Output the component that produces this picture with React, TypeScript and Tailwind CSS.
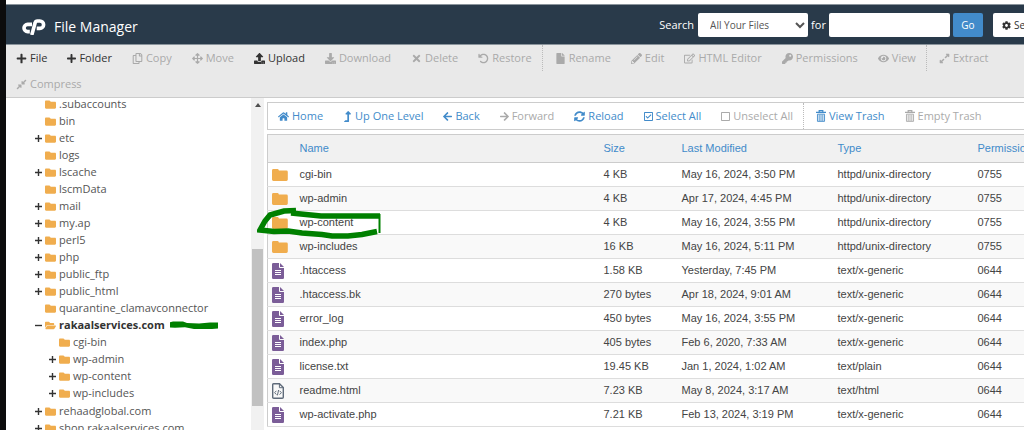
import type { ComponentType, ReactNode } from 'react';
import {
  FaArrowLeft,
  FaArrowRight,
  FaArrowsAlt,
  FaCog,
  FaCompressAlt,
  FaDownload,
  FaExpandAlt,
  FaEye,
  FaFile,
  FaFolder,
  FaFolderOpen,
  FaHome,
  FaKey,
  FaLevelUpAlt,
  FaPencilAlt,
  FaPlus,
  FaRegCheckSquare,
  FaRegCopy,
  FaRegEdit,
  FaRegSquare,
  FaSyncAlt,
  FaTimes,
  FaUpload,
} from 'react-icons/fa';
import { FaArrowRotateLeft } from 'react-icons/fa6';

function cx(...classes: Array<string | false | null | undefined>) {
  return classes.filter(Boolean).join(' ');
}

type Action = {
  label: string;
  icon: ComponentType<{ className?: string }>;
  enabled?: boolean;
  divider?: boolean;
  narrow?: boolean;
};

function TrashIcon() {
  return (
    <svg viewBox="0 0 11 13" className="h-3 w-[10px]" fill="none" stroke="currentColor">
      <path d="M0 2.5h11M3.5 2V.6h4V2" strokeWidth="1.3" />
      <path d="M1.6 4.5h7.8v7.9H1.6zM3.5 5v7M5.5 5v7M7.5 5v7" />
    </svg>
  );
}

const toolbar: Action[] = [
  { label: 'File', icon: FaPlus, enabled: true },
  { label: 'Folder', icon: FaPlus, enabled: true, narrow: true },
  { label: 'Copy', icon: FaRegCopy },
  { label: 'Move', icon: FaArrowsAlt },
  { label: 'Upload', icon: FaUpload, enabled: true },
  { label: 'Download', icon: FaDownload },
  { label: 'Delete', icon: FaTimes },
  { label: 'Restore', icon: FaArrowRotateLeft },
  { label: 'Rename', icon: FaFile, divider: true },
  { label: 'Edit', icon: FaPencilAlt },
  { label: 'HTML Editor', icon: FaRegEdit },
  { label: 'Permissions', icon: FaKey },
  { label: 'View', icon: FaEye },
  { label: 'Extract', icon: FaExpandAlt, divider: true },
  { label: 'Compress', icon: FaCompressAlt },
];

const navigation: Action[] = [
  { label: 'Home', icon: FaHome, enabled: true },
  { label: 'Up One Level', icon: FaLevelUpAlt, enabled: true, narrow: true },
  { label: 'Back', icon: FaArrowLeft, enabled: true, narrow: true },
  { label: 'Forward', icon: FaArrowRight, narrow: true },
  { label: 'Reload', icon: FaSyncAlt, enabled: true },
  { label: 'Select All', icon: FaRegCheckSquare, enabled: true, narrow: true },
  { label: 'Unselect All', icon: FaRegSquare, narrow: true },
  { label: 'View Trash', icon: TrashIcon, enabled: true, divider: true },
  { label: 'Empty Trash', icon: TrashIcon },
];

type TreeNode = {
  name: string;
  toggle?: '+' | '-';
  children?: TreeNode[];
};

const tree: TreeNode[] = [
  { name: '.subaccounts' },
  { name: 'bin' },
  { name: 'etc', toggle: '+' },
  { name: 'logs' },
  { name: 'lscache', toggle: '+' },
  { name: 'lscmData' },
  { name: 'mail', toggle: '+' },
  { name: 'my.ap', toggle: '+' },
  { name: 'perl5', toggle: '+' },
  { name: 'php', toggle: '+' },
  { name: 'public_ftp', toggle: '+' },
  { name: 'public_html', toggle: '+' },
  { name: 'quarantine_clamavconnector' },
  {
    name: 'rakaalservices.com',
    toggle: '-',
    children: [
      { name: 'cgi-bin' },
      { name: 'wp-admin', toggle: '+' },
      { name: 'wp-content', toggle: '+' },
      { name: 'wp-includes', toggle: '+' },
    ],
  },
  { name: 'rehaadglobal.com', toggle: '+' },
  { name: 'shop.rakaalservices.com', toggle: '+' },
];

type Entry = {
  kind: 'folder' | 'text' | 'html';
  name: string;
  size: string;
  modified: string;
  type: string;
  mode: string;
};

const entries: Entry[] = [
  { kind: 'folder', name: 'cgi-bin', size: '4 KB', modified: 'May 16, 2024, 3:50 PM', type: 'httpd/unix-directory', mode: '0755' },
  { kind: 'folder', name: 'wp-admin', size: '4 KB', modified: 'Apr 17, 2024, 4:45 PM', type: 'httpd/unix-directory', mode: '0755' },
  { kind: 'folder', name: 'wp-content', size: '4 KB', modified: 'May 16, 2024, 3:55 PM', type: 'httpd/unix-directory', mode: '0755' },
  { kind: 'folder', name: 'wp-includes', size: '16 KB', modified: 'May 16, 2024, 5:11 PM', type: 'httpd/unix-directory', mode: '0755' },
  { kind: 'text', name: '.htaccess', size: '1.58 KB', modified: 'Yesterday, 7:45 PM', type: 'text/x-generic', mode: '0644' },
  { kind: 'text', name: '.htaccess.bk', size: '270 bytes', modified: 'Apr 18, 2024, 9:01 AM', type: 'text/x-generic', mode: '0644' },
  { kind: 'text', name: 'error_log', size: '450 bytes', modified: 'May 16, 2024, 3:55 PM', type: 'text/x-generic', mode: '0644' },
  { kind: 'text', name: 'index.php', size: '405 bytes', modified: 'Feb 6, 2020, 7:33 AM', type: 'text/x-generic', mode: '0644' },
  { kind: 'text', name: 'license.txt', size: '19.45 KB', modified: 'Jan 1, 2024, 1:02 AM', type: 'text/plain', mode: '0644' },
  { kind: 'html', name: 'readme.html', size: '7.23 KB', modified: 'May 8, 2024, 3:17 AM', type: 'text/html', mode: '0644' },
  { kind: 'text', name: 'wp-activate.php', size: '7.21 KB', modified: 'Feb 13, 2024, 3:19 PM', type: 'text/x-generic', mode: '0644' },
];

function Logo() {
  return (
    <svg viewBox="0 0 24 16" className="h-4 w-6" fill="none" stroke="#fff" strokeWidth="3.6">
      <path d="M10 5.4H5.6a3.600 3.600 0 0 0 0 7.200h2.200" />
      <path d="M9.800 16l3.400-12.400q.4-1.600 2.200-1.600h2.500a3.700 3.700 0 0 1 0 7.400h-3.200" />
    </svg>
  );
}

function EntryIcon({ kind }: { kind: Entry['kind'] }) {
  if (kind === 'folder') {
    return (
      <svg viewBox="0 0 16 12" className="h-3 w-4" fill="#f0ad4e">
        <path d="M1.4 0h4.2q.8 0 1 .8l.3.8h7.5q1.4 0 1.4 1.4v7.6q0 1.4-1.4 1.4H1.4Q0 12 0 10.6V1.4Q0 0 1.4 0z" />
      </svg>
    );
  }
  if (kind === 'html') {
    return (
      <svg viewBox="0 0 12 16" className="h-4 w-3" fill="none" stroke="#5f6b7a">
        <path d="M1.6.7h5.9l3.8 3.8v9.7q0 1.1-1.1 1.1H1.8q-1.1 0-1.1-1.1V1.8Q.7.7 1.6.7z" strokeWidth="1.4" />
        <path d="M7.4.8v3.9h3.8M4.4 7.8L2.6 9.7l1.8 1.9M7.6 7.8l1.8 1.9-1.8 1.9M6.6 7l-1.2 5.4" />
      </svg>
    );
  }
  return (
    <svg viewBox="0 0 12 16" className="h-4 w-3">
      <path d="M1.2 0H7v4q0 1 1 1h4v9.8q0 1.2-1.2 1.2H1.2Q0 16 0 14.8V1.2Q0 0 1.2 0zM8 0l4 4H8z" fill="#7b5d98" />
      <path d="M3 7.5h6M3 9.5h6M3 11.5h6" stroke="#fff" />
    </svg>
  );
}

function ActionButton({ action, tone }: { action: Action; tone: string }) {
  const Icon = action.icon;
  return (
    <li className={cx('flex', action.divider && 'border-l border-dotted border-[#bbb] pl-[2px]')}>
      <button
        type="button"
        disabled={!action.enabled}
        className={cx('flex items-center gap-[3px] px-[10px]', action.enabled ? tone : 'text-[#aaa]')}
      >
        <Icon className={action.narrow ? 'h-[11px] w-[9px]' : 'size-[11px]'} />
        {action.label}
      </button>
    </li>
  );
}

function TreeItem({ node }: { node: TreeNode }) {
  const open = node.toggle === '-';
  const Icon = open ? FaFolderOpen : FaFolder;
  return (
    <li>
      <div className="flex h-[17px] items-center">
        {node.toggle ? (
          <button
            type="button"
            aria-label={open ? 'Collapse ' + node.name : 'Expand ' + node.name}
            className="flex w-[10px] items-center text-[#333]"
          >
            <svg viewBox="0 0 7 7" className="size-[7px]" stroke="currentColor" strokeWidth="1.4">
              <path d={open ? 'M0 3.5h7' : 'M0 3.5h7M3.5 0v7'} />
            </svg>
          </button>
        ) : (
          <span className="w-[10px]" />
        )}
        <Icon className="mr-[3px] size-[11px] text-[#f0ad4e]" />
        <a href="#" className={cx('relative whitespace-nowrap', open && 'font-bold text-[#333]')}>
          {node.name}
          {open ? (
            <svg viewBox="0 0 48 8" className="absolute top-1 left-full ml-[5px] h-2 w-12" fill="#008000">
              <path d="M0 1.2L3 .4h10l4 1.600 12 .6 11-1h8v5.800l-6 .6H24l-9-1.800-10 .6-5-.4z" />
            </svg>
          ) : null}
        </a>
      </div>
      {node.children ? (
        <ul className="mb-px pl-[14px]">
          {node.children.map((child) => (
            <TreeItem key={child.name} node={child} />
          ))}
        </ul>
      ) : null}
    </li>
  );
}

function Scrollbar() {
  return (
    <div className="flex w-[13px] shrink-0 flex-col items-center bg-[#f1f1f1]">
      <svg viewBox="0 0 6 4" className="mt-[5px] h-1 w-[6px]" fill="#505050">
        <path d="M3 0l3 4H0z" />
      </svg>
      <div className="grow-[142]" />
      <div className="w-[11px] grow-[157] bg-[#c1c1c1]" />
      <div className="grow-[24]" />
    </div>
  );
}

function HeadCell({ children }: { children?: ReactNode }) {
  return <th className="p-0 text-left font-normal">{children}</th>;
}

export default function App() {
  return (
    <div className="h-screen overflow-hidden bg-[#0c0c0d] pl-[6px] font-['Open_Sans',sans-serif] text-[11px] text-[#555]">
      <div className="flex h-full min-w-[1069px] flex-col bg-white">
        <header className="mt-1 flex h-[41px] shrink-0 items-center border-y border-[#8a949c] bg-[#293a4a] pr-[15px] pl-4 text-white">
          <div className="flex items-center gap-2 pt-1">
            <Logo />
            <h1 className="text-sm">File Manager</h1>
          </div>
          <form className="ml-auto flex items-center pt-px" onSubmit={(e) => e.preventDefault()}>
            <label htmlFor="scope" className="mr-1">
              Search
            </label>
            <select id="scope" className="h-6 w-[110px] rounded-xs bg-white pl-2 text-[10px] text-[#555]">
              <option>All Your Files</option>
            </select>
            <label htmlFor="query" className="mx-[3px]">
              for
            </label>
            <input id="query" type="text" className="h-6 w-[121px] rounded-xs bg-white px-2 text-[#555]" />
            <button type="submit" className="ml-[3px] h-6 w-[30px] rounded-xs bg-[#428bca] text-[10px]">
              Go
            </button>
            <button
              type="button"
              className="ml-[10px] flex h-6 items-center gap-[3px] rounded-xs bg-white px-[9px] text-[10px] text-[#333]"
            >
              <FaCog className="size-[9px]" />
              Settings
            </button>
          </form>
        </header>

        <ul className="flex shrink-0 flex-wrap border-b border-[#ccc] bg-[#e9e9e9] *:h-[26px]">
          {toolbar.map((action) => (
            <ActionButton key={action.label} action={action} tone="text-[#333]" />
          ))}
        </ul>

        <div className="flex min-h-0 grow">
          <nav aria-label="Folders" className="w-[245px] shrink-0 overflow-hidden pl-[29px]">
            <ul className="-mt-[2px]">
              {tree.map((node) => (
                <TreeItem key={node.name} node={node} />
              ))}
            </ul>
          </nav>
          <Scrollbar />

          <main className="min-w-0 grow overflow-hidden pt-1 pl-[3px]">
            <ul className="flex h-7 border border-[#ccc]">
              {navigation.map((action) => (
                <ActionButton key={action.label} action={action} tone="text-[#428bca]" />
              ))}
            </ul>

            <table className="mt-1 w-full table-fixed border-collapse border border-[#ccc] font-['Liberation_Sans',Arial,sans-serif] text-[#444]">
              <colgroup>
                <col className="w-8" />
                <col />
                <col className="w-[78px]" />
                <col className="w-[156px]" />
                <col className="w-[140px]" />
                <col className="w-[97px]" />
              </colgroup>
              <thead>
                <tr className="h-7 border-b border-[#ccc] bg-[#f1f1f1] text-[#428bca]">
                  <HeadCell />
                  <HeadCell>Name</HeadCell>
                  <HeadCell>Size</HeadCell>
                  <HeadCell>Last Modified</HeadCell>
                  <HeadCell>Type</HeadCell>
                  <HeadCell>Permissions</HeadCell>
                </tr>
              </thead>
              <tbody>
                {entries.map((entry) => (
                  <tr key={entry.name} className="h-6 border-b border-[#ddd] even:bg-[#f9f9f9]">
                    <td className="p-0 pl-1">
                      <EntryIcon kind={entry.kind} />
                    </td>
                    <td className="p-0">{entry.name}</td>
                    <td className="p-0">{entry.size}</td>
                    <td className="p-0">{entry.modified}</td>
                    <td className="p-0">{entry.type}</td>
                    <td className="p-0">{entry.mode}</td>
                  </tr>
                ))}
              </tbody>
            </table>
          </main>
        </div>
      </div>

      {/* marker ring round wp-content */}
      <svg
        viewBox="0 0 124 32"
        className="pointer-events-none absolute top-[207px] left-[257px] h-8 w-[124px]"
        fill="none"
        stroke="#008000"
        strokeWidth="5.5"
      >
        <path d="M39 3.500L27 4l-14 4-5 6-5 9 14 1.500 14-.5 14 2 20 1.500 10 1.500h16l14-1.500 15-3" />
        <path d="M34 6l30 3h59" />
        <path d="M122.500 7v19" strokeWidth="2" />
      </svg>
    </div>
  );
}
